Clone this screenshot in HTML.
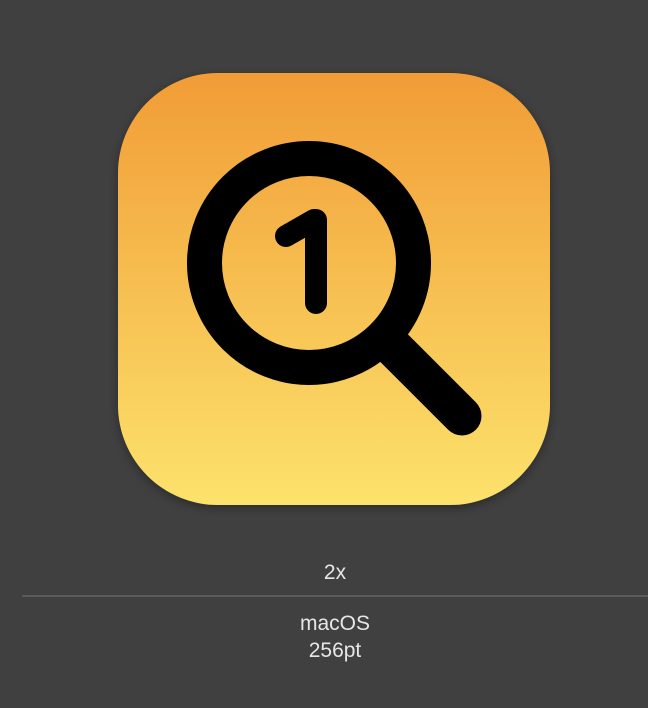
<!DOCTYPE html>
<html><head><style>
html,body{margin:0;padding:0;background:#404040;width:648px;height:708px;overflow:hidden;font-family:"Liberation Sans",sans-serif;color:#e6e6e6}
.t{position:absolute;width:100%;left:11px;text-align:center;font-size:21px}
</style></head><body>
<svg width="648" height="540" style="position:absolute;left:0;top:0">
<defs>
<linearGradient id="g" x1="0" y1="0" x2="0" y2="1">
<stop offset="0" stop-color="#F19C36"/><stop offset="1" stop-color="#FCE26C"/>
</linearGradient>
<filter id="s" x="-20%" y="-20%" width="140%" height="140%"><feDropShadow dx="0" dy="3" stdDeviation="5" flood-color="#000" flood-opacity="0.35"/></filter>
</defs>
<rect x="118" y="73" width="432" height="432" rx="100" fill="url(#g)" filter="url(#s)"/>
<circle cx="309" cy="263" r="104.5" fill="none" stroke="#000" stroke-width="35"/>
<line x1="385" y1="339" x2="462" y2="416" stroke="#000" stroke-width="39" stroke-linecap="round"/>
<path d="M286 236 L314 220 L316 220 L316 303" fill="none" stroke="#000" stroke-width="22" stroke-linecap="round" stroke-linejoin="round"/>
</svg>
<div class="t" style="top:561px">2x</div>
<div style="position:absolute;left:22px;right:0;top:595px;height:2px;background:#5a5a5a"></div>
<div class="t" style="top:612px">macOS</div>
<div class="t" style="top:639px">256pt</div>
</body></html>
